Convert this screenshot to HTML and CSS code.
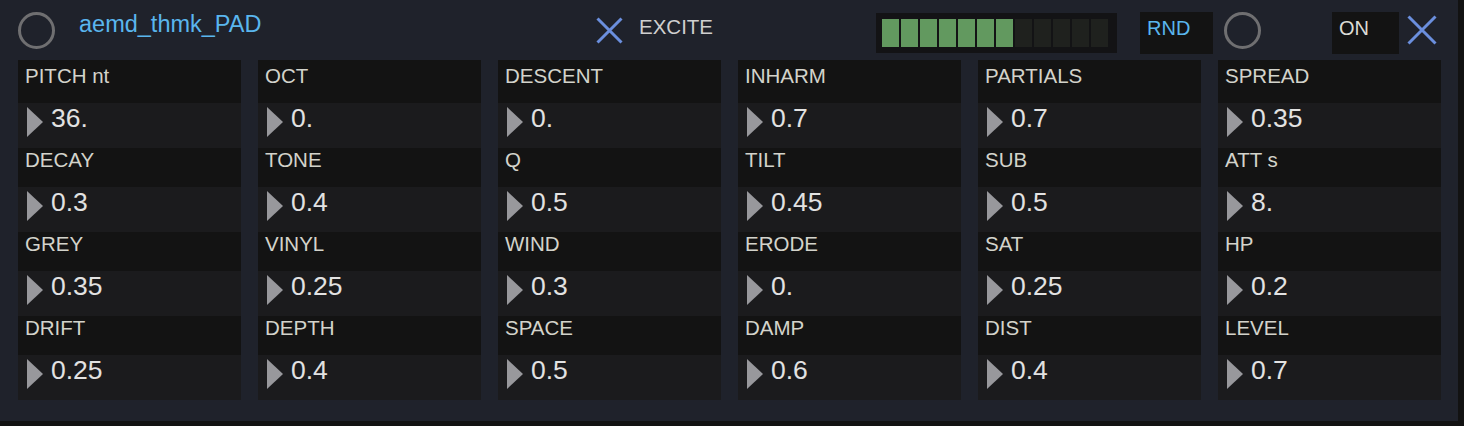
FILE: index.html
```html
<!DOCTYPE html>
<html lang="en">
<head>
    <meta charset="UTF-8">
    <meta name="viewport" content="width=device-width, initial-scale=1.0">
    <title>aemd_thmk_PAD</title>
    <link rel="stylesheet" href="styles.css">
</head>
<body>
    <div class="device">
        <div class="topbar">
            <div class="ring ring-left"></div>
            <div class="title">aemd_thmk_PAD</div>
            <svg class="cross cross-excite" width="27" height="27" viewBox="0 0 27 27">
                <path d="M1.5 1.5 L25.5 25.5 M25.5 1.5 L1.5 25.5" stroke="#6b8fde" stroke-width="3" fill="none"/>
            </svg>
            <div class="excite">EXCITE</div>
            <div class="meter" id="meter"></div>
            <div class="box rnd">RND</div>
            <div class="ring ring-right"></div>
            <div class="box on">ON</div>
            <svg class="cross cross-on" width="30" height="30" viewBox="0 0 30 30">
                <path d="M1.5 1.5 L28.5 28.5 M28.5 1.5 L1.5 28.5" stroke="#6b8fde" stroke-width="3" fill="none"/>
            </svg>
        </div>
        <div class="params" id="params"></div>
    </div>
    <script>
        // parameter columns, top to bottom
        const columns = [
            [['PITCH nt', '36.'], ['DECAY', '0.3'], ['GREY', '0.35'], ['DRIFT', '0.25']],
            [['OCT', '0.'], ['TONE', '0.4'], ['VINYL', '0.25'], ['DEPTH', '0.4']],
            [['DESCENT', '0.'], ['Q', '0.5'], ['WIND', '0.3'], ['SPACE', '0.5']],
            [['INHARM', '0.7'], ['TILT', '0.45'], ['ERODE', '0.'], ['DAMP', '0.6']],
            [['PARTIALS', '0.7'], ['SUB', '0.5'], ['SAT', '0.25'], ['DIST', '0.4']],
            [['SPREAD', '0.35'], ['ATT s', '8.'], ['HP', '0.2'], ['LEVEL', '0.7']]
        ];

        const params = document.getElementById('params');
        columns.forEach(function(col) {
            const column = document.createElement('div');
            column.className = 'column';
            col.forEach(function(p) {
                const param = document.createElement('div');
                param.className = 'param';
                param.innerHTML =
                    '<div class="label">' + p[0] + '</div>' +
                    '<div class="value"><span class="arrow"></span><span class="num">' + p[1] + '</span></div>';
                column.appendChild(param);
            });
            params.appendChild(column);
        });

        // level meter: 12 segments, 7 lit
        const meter = document.getElementById('meter');
        for (let i = 0; i < 12; i++) {
            const seg = document.createElement('div');
            seg.className = i < 7 ? 'seg lit' : 'seg';
            meter.appendChild(seg);
        }
    </script>
</body>
</html>
```

FILE: styles.css
```css
body {
    margin: 0;
    background-color: #121212;
    font-family: 'Liberation Sans', Arial, sans-serif;
}
.device {
    width: 1458px;
    height: 421px;
    background-color: #1f222b;
    box-sizing: border-box;
    padding: 0 17px 0 18px;
}
.topbar {
    height: 60px;
    display: flex;
    align-items: flex-start;
}
.ring {
    width: 37px;
    height: 37px;
    box-sizing: border-box;
    border: 3px solid #6f6f71;
    border-radius: 50%;
    margin-top: 12px;
    flex: none;
}
.title {
    margin-left: 24px;
    margin-top: 11px;
    font-size: 23.5px;
    color: #5ab6ee;
    width: 517px;
    flex: none;
}
.cross {
    flex: none;
}
.cross-excite {
    margin-top: 17px;
}
.excite {
    margin-left: 16px;
    margin-top: 15px;
    font-size: 20.5px;
    color: #cfcfcf;
    width: 237px;
    flex: none;
}
.meter {
    width: 241px;
    height: 40px;
    margin-top: 13px;
    box-sizing: border-box;
    padding: 6px;
    background-color: #131315;
    display: flex;
    gap: 2px;
    flex: none;
}
.seg {
    width: 17px;
    height: 28px;
    background-color: #1f211e;
}
.seg.lit {
    background-color: #62995f;
}
.box {
    margin-top: 12px;
    height: 42px;
    background-color: #131313;
    box-sizing: border-box;
    padding: 5px 0 0 7px;
    font-size: 20px;
    flex: none;
}
.rnd {
    width: 73px;
    margin-left: 23px;
    color: #5ab6ee;
}
.ring-right {
    margin-left: 11px;
}
.on {
    width: 67px;
    margin-left: 71px;
    color: #dcdcd6;
}
.cross-on {
    margin-left: 8px;
    margin-top: 15px;
}
.params {
    display: flex;
    gap: 17px;
}
.column {
    width: 223px;
    display: flex;
    flex-direction: column;
}
.label {
    height: 39px;
    box-sizing: border-box;
    background-color: #131313;
    color: #d3d3cb;
    font-size: 20.5px;
    padding: 3px 0 0 7px;
    line-height: 18px;
}
.param:first-child .label {
    height: 43px;
    padding-top: 7px;
}
.value {
    height: 45px;
    box-sizing: border-box;
    background-color: #1b1b1d;
    display: flex;
    align-items: flex-start;
    padding: 4px 0 0 9px;
}
.arrow {
    width: 0;
    height: 0;
    border-top: 15px solid transparent;
    border-bottom: 15px solid transparent;
    border-left: 16px solid #98989c;
    flex: none;
}
.num {
    margin-left: 8px;
    margin-top: -2px;
    font-size: 26.5px;
    line-height: 26px;
    color: #e2e2e2;
}
```
